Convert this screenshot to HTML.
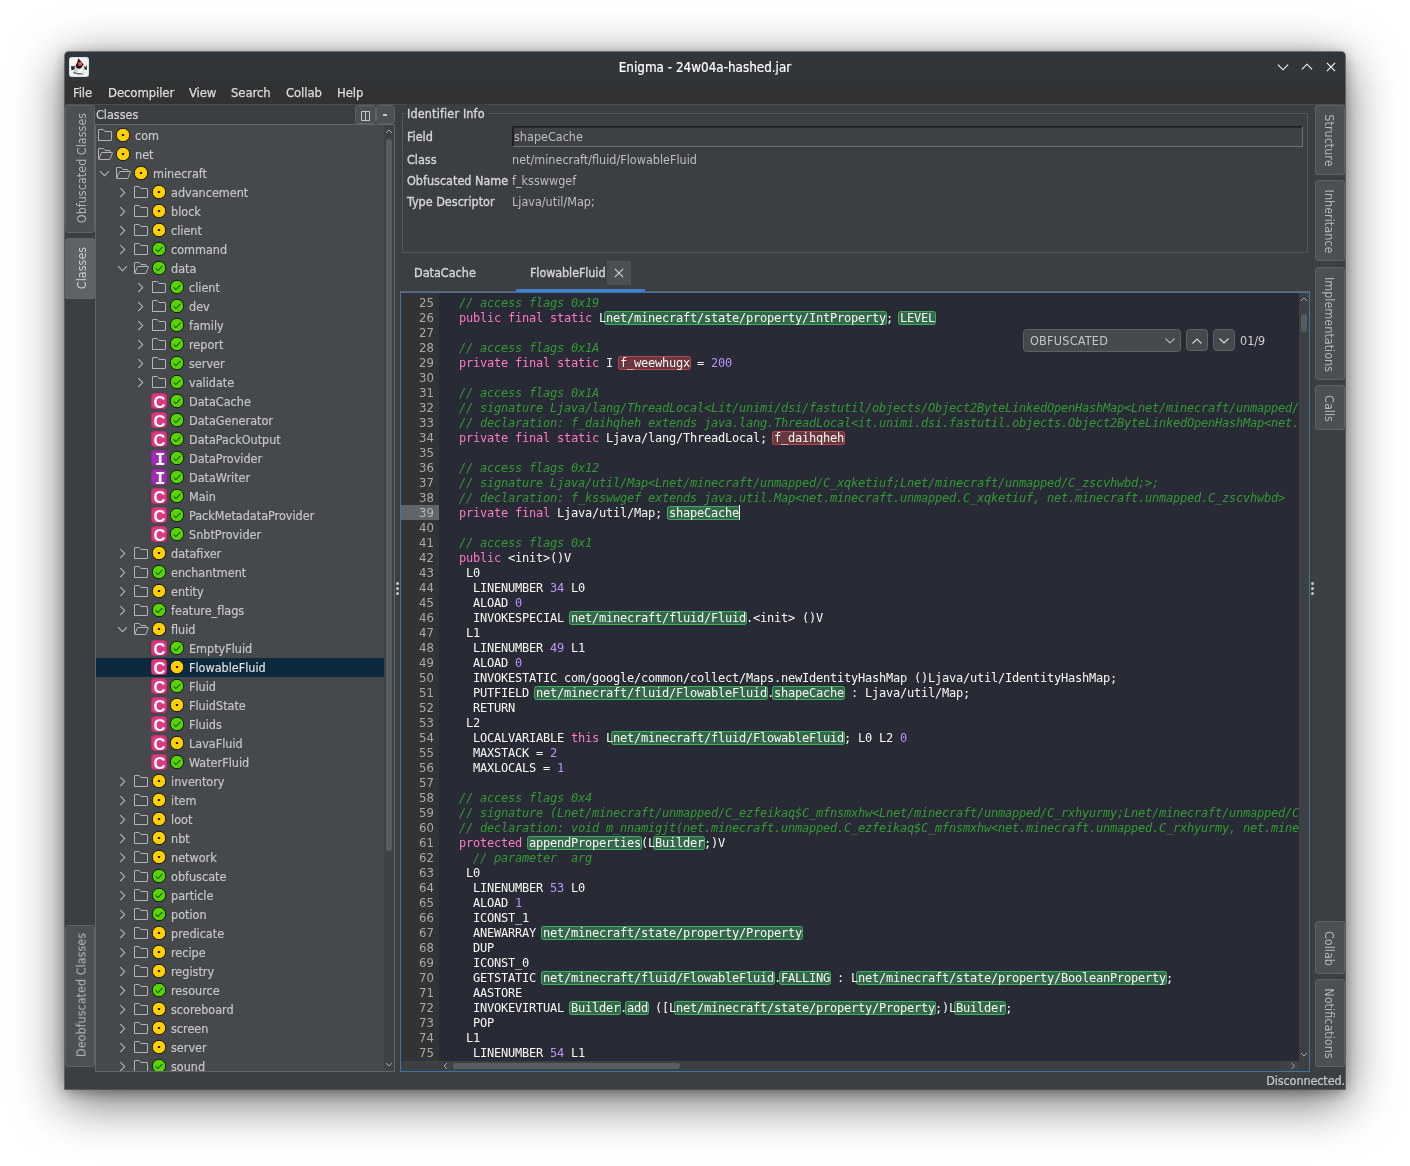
<!DOCTYPE html>
<html lang="en"><head><meta charset="utf-8"><title>Enigma - 24w04a-hashed.jar</title>
<style>
*{box-sizing:border-box;margin:0;padding:0}
html,body{width:1410px;height:1166px;background:#fff;overflow:hidden}
body{font-family:"DejaVu Sans Condensed", "Liberation Sans", sans-serif;font-size:12.5px;color:#c0c2c3;position:relative}
#win{will-change:transform;position:absolute;left:65px;top:52px;width:1280px;height:1037px;background:#3c3f41;border-radius:4px 4px 0 0;
  box-shadow:0 0 0 1px rgba(40,44,48,.55), 0 12px 50px 1px rgba(0,0,0,.58), 0 3px 14px rgba(0,0,0,.35)}
#winclip{position:absolute;left:0;top:0;width:1280px;height:1037px;border-radius:4px 4px 0 0;overflow:hidden}
#title{position:absolute;left:0;top:0;width:1280px;height:29px;background:#31363b;color:#fcfcfc;text-align:center;line-height:32px;font-size:13.350px;-webkit-text-stroke:0.2px #fcfcfc}
#menu{position:absolute;left:0;top:29px;width:1280px;height:24px;background:#303234;border-bottom:1px solid #4c4f51}
#menu span{position:absolute;top:0;line-height:23px;color:#dcdddd;white-space:nowrap;font-size:13px;-webkit-text-stroke:0.25px #dcdddd;letter-spacing:-0.1px}
.abs{position:absolute}
.vtab{position:absolute;width:30px;background:#4c5052;border:1px solid #5e6264;border-radius:3px;color:#b4b6b7}
.vtab.sel{background:#5e6366;border-color:#5e6366;color:#cfd1d2;border-radius:2px}
.vtab span{position:absolute;left:50%;top:50%;white-space:nowrap;display:block}
#tree{position:absolute;left:30px;top:72px;width:300px;height:948px;background:#45494b;border:1px solid #626567;overflow:hidden}
#treein{position:absolute;left:0;top:1px;width:288px;height:945px;overflow:hidden}
.row{position:absolute;left:0;width:288px;height:19px}
.row.sel{background:#0d293e}
.row .ic{position:absolute;top:-1px}.row .arr{position:absolute;top:0}
.row .lbl{position:absolute;top:0;line-height:19px;white-space:nowrap;color:#c4c5c6;-webkit-text-stroke:0.2px #c4c5c6}
.row.sel .lbl{color:#e6e7e8}
.kb{position:absolute;top:1px;width:16px;height:16px;border-radius:4px;color:#fff;font-weight:bold;text-align:center;border:1px solid rgba(150,20,70,.30)}
.kc{background:#dc3780;font-family:"Liberation Sans",sans-serif;font-size:16.500px;line-height:16px;text-indent:0.8px}
.ki{background:#9c2bb5;font-family:"DejaVu Sans Mono","Liberation Mono",monospace;font-size:15px;line-height:19px;text-indent:1.5px}
.ki b{display:inline-block;transform:scaleX(1.2)}
#hdr{position:absolute;left:31px;top:53px;width:200px;height:19px;line-height:19px;color:#d2d4d5;-webkit-text-stroke:0.2px #d2d4d5}
.sbtn{position:absolute;background:#4c5052;border:1px solid #5e6264;border-radius:3.5px}
#tsb{position:absolute;left:288px;top:0;width:10px;height:946px;background:#3e4245}
.thumb{position:absolute;background:#585d61;border-radius:3px}
#ed{position:absolute;left:335px;top:240px;width:910px;height:780px;border:1px solid #4671a3;background:#282a36;overflow:hidden}
#gut{position:absolute;left:0;top:0;width:38px;height:768px;background:#313335}
.ln{position:absolute;left:0;width:38px;height:15px;line-height:15px;text-align:right;padding-right:5px;color:#a9a9a8;font-size:13px;top:0}
.ln.cur{background:#626567;color:#b4b4b3}
#codein{position:absolute;left:0;top:3px}#gutin{position:absolute;left:0;top:2px}
#code{position:absolute;left:38px;top:0;width:860px;height:768px;overflow:hidden;z-index:0}
.cl{position:absolute;left:20px;height:15px;line-height:15px;white-space:pre;font-family:"DejaVu Sans Mono", "Liberation Mono", monospace;font-size:12px;letter-spacing:-0.2246px;color:#f8f8f2}
.cl .c{color:#339933;font-style:italic}
.cl .k{color:#ff79c6}
.cl .n{color:#bd93f9}
.cl .g,.cl .r{position:relative}
.cl .g::before,.cl .r::before{content:"";position:absolute;left:-2px;right:-1px;top:0;bottom:0;border-radius:2.5px;z-index:-1}
.cl .g::before{background:#34684b;border:1px solid #41ac60}
.cl .r::before{background:#69373f;border:1px solid #b8474c}
.caret{display:inline-block;width:1px;height:15px;background:#f8f8f2;vertical-align:top;margin-top:-1px;margin-left:0}
.vsb{position:absolute;left:898px;top:0;width:10px;height:768px;background:#3e4144}
.hsb{position:absolute;left:0;top:768px;width:908px;height:10px;background:#3e4144}
.lb{color:#d4d6d7;-webkit-text-stroke:0.35px #d4d6d7;white-space:nowrap}
.val{color:#bcbec0;white-space:nowrap}
#grp{position:absolute;left:337px;top:61px;width:906px;height:140px;border:1px solid #55585a}
.etab{position:absolute;line-height:20px;white-space:nowrap;color:#d2d4d5}
.btn2{position:absolute;background:#46494b;border:1px solid #5e6264;border-radius:3.5px}
</style></head><body>
<div id="win"><div id="winclip">
<div id="title">Enigma - 24w04a-hashed.jar</div>
<svg class="abs" style="left:4px;top:5px;" width="20" height="20" viewBox="0 0 20 20"><defs><linearGradient id="dk" x1="0" y1="0" x2="1" y2="0"><stop offset="0" stop-color="#b4b6ba"/><stop offset="0.6" stop-color="#ffffff"/><stop offset="1" stop-color="#d6d7da"/></linearGradient></defs><rect x="0" y="0" width="20" height="20" rx="3" fill="#f2f3f1"/><rect x="0.250" y="0.250" width="19.500" height="19.500" rx="2.900" fill="none" stroke="#9db0cc" stroke-width="0.500" opacity="0.700"/><path d="M6 8.600 C5.500 11 5.400 14 4.400 16.300 L8.800 17.300 L10.200 16 L11.800 17.300 L15.700 16.300 C15 13.500 15 10.500 14.600 8 C13.500 10 12 11.600 10.200 11.600 C8.300 11.600 6.800 10.500 6 8.600 Z" fill="url(#dk)"/><path d="M9.300 1.300 C8.800 4.500 7.900 6.200 6.700 8.300 C6.600 10.500 8.500 11.900 10.200 11.700 C12 11.600 13 10.500 13.400 9 L14.800 7.700 C13 5.500 11 3 9.300 1.300 Z" fill="#15171a"/><path d="M1.900 9.600 L5.900 8.700 L5.600 11.900 L2.700 13.400 Z" fill="#1d1f24"/><path d="M3 10 L5.400 9.400 L5.200 10.400 Z" fill="#7d9cc4"/><path d="M15 8.200 L16.500 10.400 L17.700 7.300 L17.900 12.900 L15.500 12.200 Z" fill="#23252a"/><path d="M3.800 15.400 C6 14.600 8 16.200 10 16 C12 15.800 13.500 16.600 15 17.200 C12 17.600 6 17.600 3.800 15.400 Z" fill="#3a3c40" opacity="0.750"/><circle cx="11" cy="6.900" r="2.150" fill="#f23b45"/><circle cx="11.500" cy="6.300" r="0.800" fill="#ff7f7f"/></svg>
<svg class="abs" style="left:1210px;top:7px;" width="16" height="16" viewBox="0 0 16 16"><path d="M2.900 5.700 L8 10.800 L13.100 5.700" fill="none" stroke="#fcfcfc" stroke-width="1.100"/></svg><svg class="abs" style="left:1234px;top:7px;" width="16" height="16" viewBox="0 0 16 16"><path d="M2.900 10.300 L8 5.200 L13.100 10.300" fill="none" stroke="#fcfcfc" stroke-width="1.100"/></svg><svg class="abs" style="left:1258px;top:7px;" width="16" height="16" viewBox="0 0 16 16"><path d="M3.900 3.900 L12.100 12.100 M12.100 3.900 L3.900 12.100" fill="none" stroke="#fcfcfc" stroke-width="1.100"/></svg>
<div id="menu"><span style="left:8px">File</span><span style="left:43px">Decompiler</span><span style="left:124px">View</span><span style="left:166px">Search</span><span style="left:221px">Collab</span><span style="left:272px">Help</span></div>
<div class="vtab" style="left:0px;top:53px;height:128px"><span style="transform:translate(calc(-50% + 1px),calc(-50% - 1px)) rotate(-90deg)">Obfuscated Classes</span></div>
<div class="vtab sel" style="left:0px;top:186px;height:61px"><span style="transform:translate(calc(-50% + 1px),calc(-50% - 1px)) rotate(-90deg)">Classes</span></div>
<div class="vtab" style="left:0px;top:873px;height:142px"><span style="transform:translate(calc(-50% + 1px),calc(-50% - 1px)) rotate(-90deg)">Deobfuscated Classes</span></div>
<div class="vtab" style="left:1250px;top:53px;height:70px"><span style="transform:translate(calc(-50% - 1px),calc(-50% + 0.5px)) rotate(90deg)">Structure</span></div>
<div class="vtab" style="left:1250px;top:128px;height:81px"><span style="transform:translate(calc(-50% - 1px),calc(-50% + 0.5px)) rotate(90deg)">Inheritance</span></div>
<div class="vtab" style="left:1250px;top:215px;height:113px"><span style="transform:translate(calc(-50% - 1px),calc(-50% + 0.5px)) rotate(90deg)">Implementations</span></div>
<div class="vtab" style="left:1250px;top:333px;height:45px"><span style="transform:translate(calc(-50% - 1px),calc(-50% + 0.5px)) rotate(90deg)">Calls</span></div>
<div class="vtab" style="left:1250px;top:869px;height:53px"><span style="transform:translate(calc(-50% - 1px),calc(-50% + 0.5px)) rotate(90deg)">Collab</span></div>
<div class="vtab" style="left:1250px;top:927px;height:88px"><span style="transform:translate(calc(-50% - 1px),calc(-50% + 0.5px)) rotate(90deg)">Notifications</span></div>
<div id="hdr">Classes</div>
<div class="sbtn" style="left:290px;top:53px;width:21px;height:19px;"></div>
<svg class="abs" style="left:296px;top:59px;" width="10" height="11" viewBox="0 0 10 11"><path d="M0.500 0.500 H8.500 V9.500 H0.500 Z M4.500 0.500 V9.500" fill="none" stroke="#c4c6c7" stroke-width="1"/></svg>
<div class="sbtn" style="left:311px;top:53px;width:19px;height:19px;"></div>
<div class="abs" style="left:318px;top:62px;width:4px;height:2px;background:#c0c2c3"></div>
<div id="tree"><div id="treein">
<div class="row" style="top:0px"><svg class="ic" style="left:1px" width="16" height="19" viewBox="0 0 16 19"><path d="M1.5 15.5 V5 Q1.5 4.5 2 4.5 H6.2 L8 6.5 H14 Q14.5 6.5 14.5 7 V15 Q14.5 15.500 14 15.500 H2 Q1.5 15.500 1.5 15 Z" fill="none" stroke="#b2b4b5" stroke-width="1" stroke-linejoin="round"/></svg><svg class="ic" style="left:19px" width="16" height="19" viewBox="0 0 16 19"><circle cx="8" cy="10" r="6.750" fill="#ffd000" stroke="#151515" stroke-width="1"/><rect x="6.900" y="8.900" width="2.200" height="2.200" rx="0.600" fill="#151515"/></svg><span class="lbl" style="left:39px">com</span></div>
<div class="row" style="top:19px"><svg class="ic" style="left:1px" width="17" height="19" viewBox="0 0 17 19"><path d="M1.500 15 V5 Q1.5 4.5 2 4.5 H6.2 L8 6.5 H12.500 Q13 6.5 13 7 V8.500 M1.700 15.300 L4.300 9 Q4.500 8.500 5 8.500 H15 Q15.700 8.500 15.400 9.100 L13 15 Q12.800 15.500 12.300 15.500 H2 Q1.500 15.500 1.700 15.300 Z" fill="none" stroke="#b2b4b5" stroke-width="1" stroke-linejoin="round"/></svg><svg class="ic" style="left:19px" width="16" height="19" viewBox="0 0 16 19"><circle cx="8" cy="10" r="6.750" fill="#ffd000" stroke="#151515" stroke-width="1"/><rect x="6.900" y="8.900" width="2.200" height="2.200" rx="0.600" fill="#151515"/></svg><span class="lbl" style="left:39px">net</span></div>
<div class="row" style="top:38px"><svg class="arr" style="left:2px" width="12" height="19" viewBox="0 0 12 19"><path d="M2 7.200 L6.500 11.700 L11 7.200" fill="none" stroke="#b2b4b5" stroke-width="1.100"/></svg><svg class="ic" style="left:19px" width="17" height="19" viewBox="0 0 17 19"><path d="M1.500 15 V5 Q1.5 4.5 2 4.5 H6.2 L8 6.5 H12.500 Q13 6.5 13 7 V8.500 M1.700 15.300 L4.300 9 Q4.500 8.500 5 8.500 H15 Q15.700 8.500 15.400 9.100 L13 15 Q12.800 15.500 12.300 15.500 H2 Q1.500 15.500 1.700 15.300 Z" fill="none" stroke="#b2b4b5" stroke-width="1" stroke-linejoin="round"/></svg><svg class="ic" style="left:37px" width="16" height="19" viewBox="0 0 16 19"><circle cx="8" cy="10" r="6.750" fill="#ffd000" stroke="#151515" stroke-width="1"/><rect x="6.900" y="8.900" width="2.200" height="2.200" rx="0.600" fill="#151515"/></svg><span class="lbl" style="left:57px">minecraft</span></div>
<div class="row" style="top:57px"><svg class="arr" style="left:20px" width="12" height="19" viewBox="0 0 12 19"><path d="M4.300 5.200 L8.700 9.600 L4.300 14" fill="none" stroke="#b2b4b5" stroke-width="1.100"/></svg><svg class="ic" style="left:37px" width="16" height="19" viewBox="0 0 16 19"><path d="M1.5 15.5 V5 Q1.5 4.5 2 4.5 H6.2 L8 6.5 H14 Q14.5 6.5 14.5 7 V15 Q14.5 15.500 14 15.500 H2 Q1.5 15.500 1.5 15 Z" fill="none" stroke="#b2b4b5" stroke-width="1" stroke-linejoin="round"/></svg><svg class="ic" style="left:55px" width="16" height="19" viewBox="0 0 16 19"><circle cx="8" cy="10" r="6.750" fill="#ffd000" stroke="#151515" stroke-width="1"/><rect x="6.900" y="8.900" width="2.200" height="2.200" rx="0.600" fill="#151515"/></svg><span class="lbl" style="left:75px">advancement</span></div>
<div class="row" style="top:76px"><svg class="arr" style="left:20px" width="12" height="19" viewBox="0 0 12 19"><path d="M4.300 5.200 L8.700 9.600 L4.300 14" fill="none" stroke="#b2b4b5" stroke-width="1.100"/></svg><svg class="ic" style="left:37px" width="16" height="19" viewBox="0 0 16 19"><path d="M1.5 15.5 V5 Q1.5 4.5 2 4.5 H6.2 L8 6.5 H14 Q14.5 6.5 14.5 7 V15 Q14.5 15.500 14 15.500 H2 Q1.5 15.500 1.5 15 Z" fill="none" stroke="#b2b4b5" stroke-width="1" stroke-linejoin="round"/></svg><svg class="ic" style="left:55px" width="16" height="19" viewBox="0 0 16 19"><circle cx="8" cy="10" r="6.750" fill="#ffd000" stroke="#151515" stroke-width="1"/><rect x="6.900" y="8.900" width="2.200" height="2.200" rx="0.600" fill="#151515"/></svg><span class="lbl" style="left:75px">block</span></div>
<div class="row" style="top:95px"><svg class="arr" style="left:20px" width="12" height="19" viewBox="0 0 12 19"><path d="M4.300 5.200 L8.700 9.600 L4.300 14" fill="none" stroke="#b2b4b5" stroke-width="1.100"/></svg><svg class="ic" style="left:37px" width="16" height="19" viewBox="0 0 16 19"><path d="M1.5 15.5 V5 Q1.5 4.5 2 4.5 H6.2 L8 6.5 H14 Q14.5 6.5 14.5 7 V15 Q14.5 15.500 14 15.500 H2 Q1.5 15.500 1.5 15 Z" fill="none" stroke="#b2b4b5" stroke-width="1" stroke-linejoin="round"/></svg><svg class="ic" style="left:55px" width="16" height="19" viewBox="0 0 16 19"><circle cx="8" cy="10" r="6.750" fill="#ffd000" stroke="#151515" stroke-width="1"/><rect x="6.900" y="8.900" width="2.200" height="2.200" rx="0.600" fill="#151515"/></svg><span class="lbl" style="left:75px">client</span></div>
<div class="row" style="top:114px"><svg class="arr" style="left:20px" width="12" height="19" viewBox="0 0 12 19"><path d="M4.300 5.200 L8.700 9.600 L4.300 14" fill="none" stroke="#b2b4b5" stroke-width="1.100"/></svg><svg class="ic" style="left:37px" width="16" height="19" viewBox="0 0 16 19"><path d="M1.5 15.5 V5 Q1.5 4.5 2 4.5 H6.2 L8 6.5 H14 Q14.5 6.5 14.5 7 V15 Q14.5 15.500 14 15.500 H2 Q1.5 15.500 1.5 15 Z" fill="none" stroke="#b2b4b5" stroke-width="1" stroke-linejoin="round"/></svg><svg class="ic" style="left:55px" width="16" height="19" viewBox="0 0 16 19"><circle cx="8" cy="10" r="6.750" fill="#55d400" stroke="#151515" stroke-width="1"/><path d="M4.600 10.400 L7 12.700 L11.400 7.900" fill="none" stroke="#111" stroke-width="0.950"/></svg><span class="lbl" style="left:75px">command</span></div>
<div class="row" style="top:133px"><svg class="arr" style="left:20px" width="12" height="19" viewBox="0 0 12 19"><path d="M2 7.200 L6.500 11.700 L11 7.200" fill="none" stroke="#b2b4b5" stroke-width="1.100"/></svg><svg class="ic" style="left:37px" width="17" height="19" viewBox="0 0 17 19"><path d="M1.500 15 V5 Q1.5 4.5 2 4.5 H6.2 L8 6.5 H12.500 Q13 6.5 13 7 V8.500 M1.700 15.300 L4.300 9 Q4.500 8.500 5 8.500 H15 Q15.700 8.500 15.400 9.100 L13 15 Q12.800 15.500 12.300 15.500 H2 Q1.500 15.500 1.700 15.300 Z" fill="none" stroke="#b2b4b5" stroke-width="1" stroke-linejoin="round"/></svg><svg class="ic" style="left:55px" width="16" height="19" viewBox="0 0 16 19"><circle cx="8" cy="10" r="6.750" fill="#55d400" stroke="#151515" stroke-width="1"/><path d="M4.600 10.400 L7 12.700 L11.400 7.900" fill="none" stroke="#111" stroke-width="0.950"/></svg><span class="lbl" style="left:75px">data</span></div>
<div class="row" style="top:152px"><svg class="arr" style="left:38px" width="12" height="19" viewBox="0 0 12 19"><path d="M4.300 5.200 L8.700 9.600 L4.300 14" fill="none" stroke="#b2b4b5" stroke-width="1.100"/></svg><svg class="ic" style="left:55px" width="16" height="19" viewBox="0 0 16 19"><path d="M1.5 15.5 V5 Q1.5 4.5 2 4.5 H6.2 L8 6.5 H14 Q14.5 6.5 14.5 7 V15 Q14.5 15.500 14 15.500 H2 Q1.5 15.500 1.5 15 Z" fill="none" stroke="#b2b4b5" stroke-width="1" stroke-linejoin="round"/></svg><svg class="ic" style="left:73px" width="16" height="19" viewBox="0 0 16 19"><circle cx="8" cy="10" r="6.750" fill="#55d400" stroke="#151515" stroke-width="1"/><path d="M4.600 10.400 L7 12.700 L11.400 7.900" fill="none" stroke="#111" stroke-width="0.950"/></svg><span class="lbl" style="left:93px">client</span></div>
<div class="row" style="top:171px"><svg class="arr" style="left:38px" width="12" height="19" viewBox="0 0 12 19"><path d="M4.300 5.200 L8.700 9.600 L4.300 14" fill="none" stroke="#b2b4b5" stroke-width="1.100"/></svg><svg class="ic" style="left:55px" width="16" height="19" viewBox="0 0 16 19"><path d="M1.5 15.5 V5 Q1.5 4.5 2 4.5 H6.2 L8 6.5 H14 Q14.5 6.5 14.5 7 V15 Q14.5 15.500 14 15.500 H2 Q1.5 15.500 1.5 15 Z" fill="none" stroke="#b2b4b5" stroke-width="1" stroke-linejoin="round"/></svg><svg class="ic" style="left:73px" width="16" height="19" viewBox="0 0 16 19"><circle cx="8" cy="10" r="6.750" fill="#55d400" stroke="#151515" stroke-width="1"/><path d="M4.600 10.400 L7 12.700 L11.400 7.900" fill="none" stroke="#111" stroke-width="0.950"/></svg><span class="lbl" style="left:93px">dev</span></div>
<div class="row" style="top:190px"><svg class="arr" style="left:38px" width="12" height="19" viewBox="0 0 12 19"><path d="M4.300 5.200 L8.700 9.600 L4.300 14" fill="none" stroke="#b2b4b5" stroke-width="1.100"/></svg><svg class="ic" style="left:55px" width="16" height="19" viewBox="0 0 16 19"><path d="M1.5 15.5 V5 Q1.5 4.5 2 4.5 H6.2 L8 6.5 H14 Q14.5 6.5 14.5 7 V15 Q14.5 15.500 14 15.500 H2 Q1.5 15.500 1.5 15 Z" fill="none" stroke="#b2b4b5" stroke-width="1" stroke-linejoin="round"/></svg><svg class="ic" style="left:73px" width="16" height="19" viewBox="0 0 16 19"><circle cx="8" cy="10" r="6.750" fill="#55d400" stroke="#151515" stroke-width="1"/><path d="M4.600 10.400 L7 12.700 L11.400 7.900" fill="none" stroke="#111" stroke-width="0.950"/></svg><span class="lbl" style="left:93px">family</span></div>
<div class="row" style="top:209px"><svg class="arr" style="left:38px" width="12" height="19" viewBox="0 0 12 19"><path d="M4.300 5.200 L8.700 9.600 L4.300 14" fill="none" stroke="#b2b4b5" stroke-width="1.100"/></svg><svg class="ic" style="left:55px" width="16" height="19" viewBox="0 0 16 19"><path d="M1.5 15.5 V5 Q1.5 4.5 2 4.5 H6.2 L8 6.5 H14 Q14.5 6.5 14.5 7 V15 Q14.5 15.500 14 15.500 H2 Q1.5 15.500 1.5 15 Z" fill="none" stroke="#b2b4b5" stroke-width="1" stroke-linejoin="round"/></svg><svg class="ic" style="left:73px" width="16" height="19" viewBox="0 0 16 19"><circle cx="8" cy="10" r="6.750" fill="#55d400" stroke="#151515" stroke-width="1"/><path d="M4.600 10.400 L7 12.700 L11.400 7.900" fill="none" stroke="#111" stroke-width="0.950"/></svg><span class="lbl" style="left:93px">report</span></div>
<div class="row" style="top:228px"><svg class="arr" style="left:38px" width="12" height="19" viewBox="0 0 12 19"><path d="M4.300 5.200 L8.700 9.600 L4.300 14" fill="none" stroke="#b2b4b5" stroke-width="1.100"/></svg><svg class="ic" style="left:55px" width="16" height="19" viewBox="0 0 16 19"><path d="M1.5 15.5 V5 Q1.5 4.5 2 4.5 H6.2 L8 6.5 H14 Q14.5 6.5 14.5 7 V15 Q14.5 15.500 14 15.500 H2 Q1.5 15.500 1.5 15 Z" fill="none" stroke="#b2b4b5" stroke-width="1" stroke-linejoin="round"/></svg><svg class="ic" style="left:73px" width="16" height="19" viewBox="0 0 16 19"><circle cx="8" cy="10" r="6.750" fill="#55d400" stroke="#151515" stroke-width="1"/><path d="M4.600 10.400 L7 12.700 L11.400 7.900" fill="none" stroke="#111" stroke-width="0.950"/></svg><span class="lbl" style="left:93px">server</span></div>
<div class="row" style="top:247px"><svg class="arr" style="left:38px" width="12" height="19" viewBox="0 0 12 19"><path d="M4.300 5.200 L8.700 9.600 L4.300 14" fill="none" stroke="#b2b4b5" stroke-width="1.100"/></svg><svg class="ic" style="left:55px" width="16" height="19" viewBox="0 0 16 19"><path d="M1.5 15.5 V5 Q1.5 4.5 2 4.5 H6.2 L8 6.5 H14 Q14.5 6.5 14.5 7 V15 Q14.5 15.500 14 15.500 H2 Q1.5 15.500 1.5 15 Z" fill="none" stroke="#b2b4b5" stroke-width="1" stroke-linejoin="round"/></svg><svg class="ic" style="left:73px" width="16" height="19" viewBox="0 0 16 19"><circle cx="8" cy="10" r="6.750" fill="#55d400" stroke="#151515" stroke-width="1"/><path d="M4.600 10.400 L7 12.700 L11.400 7.900" fill="none" stroke="#111" stroke-width="0.950"/></svg><span class="lbl" style="left:93px">validate</span></div>
<div class="row" style="top:266px"><span class="kb kc" style="left:55px">C</span><svg class="ic" style="left:73px" width="16" height="19" viewBox="0 0 16 19"><circle cx="8" cy="10" r="6.750" fill="#55d400" stroke="#151515" stroke-width="1"/><path d="M4.600 10.400 L7 12.700 L11.400 7.900" fill="none" stroke="#111" stroke-width="0.950"/></svg><span class="lbl" style="left:93px">DataCache</span></div>
<div class="row" style="top:285px"><span class="kb kc" style="left:55px">C</span><svg class="ic" style="left:73px" width="16" height="19" viewBox="0 0 16 19"><circle cx="8" cy="10" r="6.750" fill="#55d400" stroke="#151515" stroke-width="1"/><path d="M4.600 10.400 L7 12.700 L11.400 7.900" fill="none" stroke="#111" stroke-width="0.950"/></svg><span class="lbl" style="left:93px">DataGenerator</span></div>
<div class="row" style="top:304px"><span class="kb kc" style="left:55px">C</span><svg class="ic" style="left:73px" width="16" height="19" viewBox="0 0 16 19"><circle cx="8" cy="10" r="6.750" fill="#55d400" stroke="#151515" stroke-width="1"/><path d="M4.600 10.400 L7 12.700 L11.400 7.900" fill="none" stroke="#111" stroke-width="0.950"/></svg><span class="lbl" style="left:93px">DataPackOutput</span></div>
<div class="row" style="top:323px"><span class="kb ki" style="left:55px"><b>I</b></span><svg class="ic" style="left:73px" width="16" height="19" viewBox="0 0 16 19"><circle cx="8" cy="10" r="6.750" fill="#55d400" stroke="#151515" stroke-width="1"/><path d="M4.600 10.400 L7 12.700 L11.400 7.900" fill="none" stroke="#111" stroke-width="0.950"/></svg><span class="lbl" style="left:93px">DataProvider</span></div>
<div class="row" style="top:342px"><span class="kb ki" style="left:55px"><b>I</b></span><svg class="ic" style="left:73px" width="16" height="19" viewBox="0 0 16 19"><circle cx="8" cy="10" r="6.750" fill="#55d400" stroke="#151515" stroke-width="1"/><path d="M4.600 10.400 L7 12.700 L11.400 7.900" fill="none" stroke="#111" stroke-width="0.950"/></svg><span class="lbl" style="left:93px">DataWriter</span></div>
<div class="row" style="top:361px"><span class="kb kc" style="left:55px">C</span><svg class="ic" style="left:73px" width="16" height="19" viewBox="0 0 16 19"><circle cx="8" cy="10" r="6.750" fill="#55d400" stroke="#151515" stroke-width="1"/><path d="M4.600 10.400 L7 12.700 L11.400 7.900" fill="none" stroke="#111" stroke-width="0.950"/></svg><span class="lbl" style="left:93px">Main</span></div>
<div class="row" style="top:380px"><span class="kb kc" style="left:55px">C</span><svg class="ic" style="left:73px" width="16" height="19" viewBox="0 0 16 19"><circle cx="8" cy="10" r="6.750" fill="#55d400" stroke="#151515" stroke-width="1"/><path d="M4.600 10.400 L7 12.700 L11.400 7.900" fill="none" stroke="#111" stroke-width="0.950"/></svg><span class="lbl" style="left:93px">PackMetadataProvider</span></div>
<div class="row" style="top:399px"><span class="kb kc" style="left:55px">C</span><svg class="ic" style="left:73px" width="16" height="19" viewBox="0 0 16 19"><circle cx="8" cy="10" r="6.750" fill="#55d400" stroke="#151515" stroke-width="1"/><path d="M4.600 10.400 L7 12.700 L11.400 7.900" fill="none" stroke="#111" stroke-width="0.950"/></svg><span class="lbl" style="left:93px">SnbtProvider</span></div>
<div class="row" style="top:418px"><svg class="arr" style="left:20px" width="12" height="19" viewBox="0 0 12 19"><path d="M4.300 5.200 L8.700 9.600 L4.300 14" fill="none" stroke="#b2b4b5" stroke-width="1.100"/></svg><svg class="ic" style="left:37px" width="16" height="19" viewBox="0 0 16 19"><path d="M1.5 15.5 V5 Q1.5 4.5 2 4.5 H6.2 L8 6.5 H14 Q14.5 6.5 14.5 7 V15 Q14.5 15.500 14 15.500 H2 Q1.5 15.500 1.5 15 Z" fill="none" stroke="#b2b4b5" stroke-width="1" stroke-linejoin="round"/></svg><svg class="ic" style="left:55px" width="16" height="19" viewBox="0 0 16 19"><circle cx="8" cy="10" r="6.750" fill="#ffd000" stroke="#151515" stroke-width="1"/><rect x="6.900" y="8.900" width="2.200" height="2.200" rx="0.600" fill="#151515"/></svg><span class="lbl" style="left:75px">datafixer</span></div>
<div class="row" style="top:437px"><svg class="arr" style="left:20px" width="12" height="19" viewBox="0 0 12 19"><path d="M4.300 5.200 L8.700 9.600 L4.300 14" fill="none" stroke="#b2b4b5" stroke-width="1.100"/></svg><svg class="ic" style="left:37px" width="16" height="19" viewBox="0 0 16 19"><path d="M1.5 15.5 V5 Q1.5 4.5 2 4.5 H6.2 L8 6.5 H14 Q14.5 6.5 14.5 7 V15 Q14.5 15.500 14 15.500 H2 Q1.5 15.500 1.5 15 Z" fill="none" stroke="#b2b4b5" stroke-width="1" stroke-linejoin="round"/></svg><svg class="ic" style="left:55px" width="16" height="19" viewBox="0 0 16 19"><circle cx="8" cy="10" r="6.750" fill="#55d400" stroke="#151515" stroke-width="1"/><path d="M4.600 10.400 L7 12.700 L11.400 7.900" fill="none" stroke="#111" stroke-width="0.950"/></svg><span class="lbl" style="left:75px">enchantment</span></div>
<div class="row" style="top:456px"><svg class="arr" style="left:20px" width="12" height="19" viewBox="0 0 12 19"><path d="M4.300 5.200 L8.700 9.600 L4.300 14" fill="none" stroke="#b2b4b5" stroke-width="1.100"/></svg><svg class="ic" style="left:37px" width="16" height="19" viewBox="0 0 16 19"><path d="M1.5 15.5 V5 Q1.5 4.5 2 4.5 H6.2 L8 6.5 H14 Q14.5 6.5 14.5 7 V15 Q14.5 15.500 14 15.500 H2 Q1.5 15.500 1.5 15 Z" fill="none" stroke="#b2b4b5" stroke-width="1" stroke-linejoin="round"/></svg><svg class="ic" style="left:55px" width="16" height="19" viewBox="0 0 16 19"><circle cx="8" cy="10" r="6.750" fill="#ffd000" stroke="#151515" stroke-width="1"/><rect x="6.900" y="8.900" width="2.200" height="2.200" rx="0.600" fill="#151515"/></svg><span class="lbl" style="left:75px">entity</span></div>
<div class="row" style="top:475px"><svg class="arr" style="left:20px" width="12" height="19" viewBox="0 0 12 19"><path d="M4.300 5.200 L8.700 9.600 L4.300 14" fill="none" stroke="#b2b4b5" stroke-width="1.100"/></svg><svg class="ic" style="left:37px" width="16" height="19" viewBox="0 0 16 19"><path d="M1.5 15.5 V5 Q1.5 4.5 2 4.5 H6.2 L8 6.5 H14 Q14.5 6.5 14.5 7 V15 Q14.5 15.500 14 15.500 H2 Q1.5 15.500 1.5 15 Z" fill="none" stroke="#b2b4b5" stroke-width="1" stroke-linejoin="round"/></svg><svg class="ic" style="left:55px" width="16" height="19" viewBox="0 0 16 19"><circle cx="8" cy="10" r="6.750" fill="#55d400" stroke="#151515" stroke-width="1"/><path d="M4.600 10.400 L7 12.700 L11.400 7.900" fill="none" stroke="#111" stroke-width="0.950"/></svg><span class="lbl" style="left:75px">feature_flags</span></div>
<div class="row" style="top:494px"><svg class="arr" style="left:20px" width="12" height="19" viewBox="0 0 12 19"><path d="M2 7.200 L6.500 11.700 L11 7.200" fill="none" stroke="#b2b4b5" stroke-width="1.100"/></svg><svg class="ic" style="left:37px" width="17" height="19" viewBox="0 0 17 19"><path d="M1.500 15 V5 Q1.5 4.5 2 4.5 H6.2 L8 6.5 H12.500 Q13 6.5 13 7 V8.500 M1.700 15.300 L4.300 9 Q4.500 8.500 5 8.500 H15 Q15.700 8.500 15.400 9.100 L13 15 Q12.800 15.500 12.300 15.500 H2 Q1.500 15.500 1.700 15.300 Z" fill="none" stroke="#b2b4b5" stroke-width="1" stroke-linejoin="round"/></svg><svg class="ic" style="left:55px" width="16" height="19" viewBox="0 0 16 19"><circle cx="8" cy="10" r="6.750" fill="#ffd000" stroke="#151515" stroke-width="1"/><rect x="6.900" y="8.900" width="2.200" height="2.200" rx="0.600" fill="#151515"/></svg><span class="lbl" style="left:75px">fluid</span></div>
<div class="row" style="top:513px"><span class="kb kc" style="left:55px">C</span><svg class="ic" style="left:73px" width="16" height="19" viewBox="0 0 16 19"><circle cx="8" cy="10" r="6.750" fill="#55d400" stroke="#151515" stroke-width="1"/><path d="M4.600 10.400 L7 12.700 L11.400 7.900" fill="none" stroke="#111" stroke-width="0.950"/></svg><span class="lbl" style="left:93px">EmptyFluid</span></div>
<div class="row sel" style="top:532px"><span class="kb kc" style="left:55px">C</span><svg class="ic" style="left:73px" width="16" height="19" viewBox="0 0 16 19"><circle cx="8" cy="10" r="6.750" fill="#ffd000" stroke="#151515" stroke-width="1"/><rect x="6.900" y="8.900" width="2.200" height="2.200" rx="0.600" fill="#151515"/></svg><span class="lbl" style="left:93px">FlowableFluid</span></div>
<div class="row" style="top:551px"><span class="kb kc" style="left:55px">C</span><svg class="ic" style="left:73px" width="16" height="19" viewBox="0 0 16 19"><circle cx="8" cy="10" r="6.750" fill="#55d400" stroke="#151515" stroke-width="1"/><path d="M4.600 10.400 L7 12.700 L11.400 7.900" fill="none" stroke="#111" stroke-width="0.950"/></svg><span class="lbl" style="left:93px">Fluid</span></div>
<div class="row" style="top:570px"><span class="kb kc" style="left:55px">C</span><svg class="ic" style="left:73px" width="16" height="19" viewBox="0 0 16 19"><circle cx="8" cy="10" r="6.750" fill="#ffd000" stroke="#151515" stroke-width="1"/><rect x="6.900" y="8.900" width="2.200" height="2.200" rx="0.600" fill="#151515"/></svg><span class="lbl" style="left:93px">FluidState</span></div>
<div class="row" style="top:589px"><span class="kb kc" style="left:55px">C</span><svg class="ic" style="left:73px" width="16" height="19" viewBox="0 0 16 19"><circle cx="8" cy="10" r="6.750" fill="#55d400" stroke="#151515" stroke-width="1"/><path d="M4.600 10.400 L7 12.700 L11.400 7.900" fill="none" stroke="#111" stroke-width="0.950"/></svg><span class="lbl" style="left:93px">Fluids</span></div>
<div class="row" style="top:608px"><span class="kb kc" style="left:55px">C</span><svg class="ic" style="left:73px" width="16" height="19" viewBox="0 0 16 19"><circle cx="8" cy="10" r="6.750" fill="#ffd000" stroke="#151515" stroke-width="1"/><rect x="6.900" y="8.900" width="2.200" height="2.200" rx="0.600" fill="#151515"/></svg><span class="lbl" style="left:93px">LavaFluid</span></div>
<div class="row" style="top:627px"><span class="kb kc" style="left:55px">C</span><svg class="ic" style="left:73px" width="16" height="19" viewBox="0 0 16 19"><circle cx="8" cy="10" r="6.750" fill="#55d400" stroke="#151515" stroke-width="1"/><path d="M4.600 10.400 L7 12.700 L11.400 7.900" fill="none" stroke="#111" stroke-width="0.950"/></svg><span class="lbl" style="left:93px">WaterFluid</span></div>
<div class="row" style="top:646px"><svg class="arr" style="left:20px" width="12" height="19" viewBox="0 0 12 19"><path d="M4.300 5.200 L8.700 9.600 L4.300 14" fill="none" stroke="#b2b4b5" stroke-width="1.100"/></svg><svg class="ic" style="left:37px" width="16" height="19" viewBox="0 0 16 19"><path d="M1.5 15.5 V5 Q1.5 4.5 2 4.5 H6.2 L8 6.5 H14 Q14.5 6.5 14.5 7 V15 Q14.5 15.500 14 15.500 H2 Q1.5 15.500 1.5 15 Z" fill="none" stroke="#b2b4b5" stroke-width="1" stroke-linejoin="round"/></svg><svg class="ic" style="left:55px" width="16" height="19" viewBox="0 0 16 19"><circle cx="8" cy="10" r="6.750" fill="#ffd000" stroke="#151515" stroke-width="1"/><rect x="6.900" y="8.900" width="2.200" height="2.200" rx="0.600" fill="#151515"/></svg><span class="lbl" style="left:75px">inventory</span></div>
<div class="row" style="top:665px"><svg class="arr" style="left:20px" width="12" height="19" viewBox="0 0 12 19"><path d="M4.300 5.200 L8.700 9.600 L4.300 14" fill="none" stroke="#b2b4b5" stroke-width="1.100"/></svg><svg class="ic" style="left:37px" width="16" height="19" viewBox="0 0 16 19"><path d="M1.5 15.5 V5 Q1.5 4.5 2 4.5 H6.2 L8 6.5 H14 Q14.5 6.5 14.5 7 V15 Q14.5 15.500 14 15.500 H2 Q1.5 15.500 1.5 15 Z" fill="none" stroke="#b2b4b5" stroke-width="1" stroke-linejoin="round"/></svg><svg class="ic" style="left:55px" width="16" height="19" viewBox="0 0 16 19"><circle cx="8" cy="10" r="6.750" fill="#ffd000" stroke="#151515" stroke-width="1"/><rect x="6.900" y="8.900" width="2.200" height="2.200" rx="0.600" fill="#151515"/></svg><span class="lbl" style="left:75px">item</span></div>
<div class="row" style="top:684px"><svg class="arr" style="left:20px" width="12" height="19" viewBox="0 0 12 19"><path d="M4.300 5.200 L8.700 9.600 L4.300 14" fill="none" stroke="#b2b4b5" stroke-width="1.100"/></svg><svg class="ic" style="left:37px" width="16" height="19" viewBox="0 0 16 19"><path d="M1.5 15.5 V5 Q1.5 4.5 2 4.5 H6.2 L8 6.5 H14 Q14.5 6.5 14.5 7 V15 Q14.5 15.500 14 15.500 H2 Q1.5 15.500 1.5 15 Z" fill="none" stroke="#b2b4b5" stroke-width="1" stroke-linejoin="round"/></svg><svg class="ic" style="left:55px" width="16" height="19" viewBox="0 0 16 19"><circle cx="8" cy="10" r="6.750" fill="#ffd000" stroke="#151515" stroke-width="1"/><rect x="6.900" y="8.900" width="2.200" height="2.200" rx="0.600" fill="#151515"/></svg><span class="lbl" style="left:75px">loot</span></div>
<div class="row" style="top:703px"><svg class="arr" style="left:20px" width="12" height="19" viewBox="0 0 12 19"><path d="M4.300 5.200 L8.700 9.600 L4.300 14" fill="none" stroke="#b2b4b5" stroke-width="1.100"/></svg><svg class="ic" style="left:37px" width="16" height="19" viewBox="0 0 16 19"><path d="M1.5 15.5 V5 Q1.5 4.5 2 4.5 H6.2 L8 6.5 H14 Q14.5 6.5 14.5 7 V15 Q14.5 15.500 14 15.500 H2 Q1.5 15.500 1.5 15 Z" fill="none" stroke="#b2b4b5" stroke-width="1" stroke-linejoin="round"/></svg><svg class="ic" style="left:55px" width="16" height="19" viewBox="0 0 16 19"><circle cx="8" cy="10" r="6.750" fill="#ffd000" stroke="#151515" stroke-width="1"/><rect x="6.900" y="8.900" width="2.200" height="2.200" rx="0.600" fill="#151515"/></svg><span class="lbl" style="left:75px">nbt</span></div>
<div class="row" style="top:722px"><svg class="arr" style="left:20px" width="12" height="19" viewBox="0 0 12 19"><path d="M4.300 5.200 L8.700 9.600 L4.300 14" fill="none" stroke="#b2b4b5" stroke-width="1.100"/></svg><svg class="ic" style="left:37px" width="16" height="19" viewBox="0 0 16 19"><path d="M1.5 15.5 V5 Q1.5 4.5 2 4.5 H6.2 L8 6.5 H14 Q14.5 6.5 14.5 7 V15 Q14.5 15.500 14 15.500 H2 Q1.5 15.500 1.5 15 Z" fill="none" stroke="#b2b4b5" stroke-width="1" stroke-linejoin="round"/></svg><svg class="ic" style="left:55px" width="16" height="19" viewBox="0 0 16 19"><circle cx="8" cy="10" r="6.750" fill="#ffd000" stroke="#151515" stroke-width="1"/><rect x="6.900" y="8.900" width="2.200" height="2.200" rx="0.600" fill="#151515"/></svg><span class="lbl" style="left:75px">network</span></div>
<div class="row" style="top:741px"><svg class="arr" style="left:20px" width="12" height="19" viewBox="0 0 12 19"><path d="M4.300 5.200 L8.700 9.600 L4.300 14" fill="none" stroke="#b2b4b5" stroke-width="1.100"/></svg><svg class="ic" style="left:37px" width="16" height="19" viewBox="0 0 16 19"><path d="M1.5 15.5 V5 Q1.5 4.5 2 4.5 H6.2 L8 6.5 H14 Q14.5 6.5 14.5 7 V15 Q14.5 15.500 14 15.500 H2 Q1.5 15.500 1.5 15 Z" fill="none" stroke="#b2b4b5" stroke-width="1" stroke-linejoin="round"/></svg><svg class="ic" style="left:55px" width="16" height="19" viewBox="0 0 16 19"><circle cx="8" cy="10" r="6.750" fill="#55d400" stroke="#151515" stroke-width="1"/><path d="M4.600 10.400 L7 12.700 L11.400 7.900" fill="none" stroke="#111" stroke-width="0.950"/></svg><span class="lbl" style="left:75px">obfuscate</span></div>
<div class="row" style="top:760px"><svg class="arr" style="left:20px" width="12" height="19" viewBox="0 0 12 19"><path d="M4.300 5.200 L8.700 9.600 L4.300 14" fill="none" stroke="#b2b4b5" stroke-width="1.100"/></svg><svg class="ic" style="left:37px" width="16" height="19" viewBox="0 0 16 19"><path d="M1.5 15.5 V5 Q1.5 4.5 2 4.5 H6.2 L8 6.5 H14 Q14.5 6.5 14.5 7 V15 Q14.5 15.500 14 15.500 H2 Q1.5 15.500 1.5 15 Z" fill="none" stroke="#b2b4b5" stroke-width="1" stroke-linejoin="round"/></svg><svg class="ic" style="left:55px" width="16" height="19" viewBox="0 0 16 19"><circle cx="8" cy="10" r="6.750" fill="#55d400" stroke="#151515" stroke-width="1"/><path d="M4.600 10.400 L7 12.700 L11.400 7.900" fill="none" stroke="#111" stroke-width="0.950"/></svg><span class="lbl" style="left:75px">particle</span></div>
<div class="row" style="top:779px"><svg class="arr" style="left:20px" width="12" height="19" viewBox="0 0 12 19"><path d="M4.300 5.200 L8.700 9.600 L4.300 14" fill="none" stroke="#b2b4b5" stroke-width="1.100"/></svg><svg class="ic" style="left:37px" width="16" height="19" viewBox="0 0 16 19"><path d="M1.5 15.5 V5 Q1.5 4.5 2 4.5 H6.2 L8 6.5 H14 Q14.5 6.5 14.5 7 V15 Q14.5 15.500 14 15.500 H2 Q1.5 15.500 1.5 15 Z" fill="none" stroke="#b2b4b5" stroke-width="1" stroke-linejoin="round"/></svg><svg class="ic" style="left:55px" width="16" height="19" viewBox="0 0 16 19"><circle cx="8" cy="10" r="6.750" fill="#55d400" stroke="#151515" stroke-width="1"/><path d="M4.600 10.400 L7 12.700 L11.400 7.900" fill="none" stroke="#111" stroke-width="0.950"/></svg><span class="lbl" style="left:75px">potion</span></div>
<div class="row" style="top:798px"><svg class="arr" style="left:20px" width="12" height="19" viewBox="0 0 12 19"><path d="M4.300 5.200 L8.700 9.600 L4.300 14" fill="none" stroke="#b2b4b5" stroke-width="1.100"/></svg><svg class="ic" style="left:37px" width="16" height="19" viewBox="0 0 16 19"><path d="M1.5 15.5 V5 Q1.5 4.5 2 4.5 H6.2 L8 6.5 H14 Q14.5 6.5 14.5 7 V15 Q14.5 15.500 14 15.500 H2 Q1.5 15.500 1.5 15 Z" fill="none" stroke="#b2b4b5" stroke-width="1" stroke-linejoin="round"/></svg><svg class="ic" style="left:55px" width="16" height="19" viewBox="0 0 16 19"><circle cx="8" cy="10" r="6.750" fill="#ffd000" stroke="#151515" stroke-width="1"/><rect x="6.900" y="8.900" width="2.200" height="2.200" rx="0.600" fill="#151515"/></svg><span class="lbl" style="left:75px">predicate</span></div>
<div class="row" style="top:817px"><svg class="arr" style="left:20px" width="12" height="19" viewBox="0 0 12 19"><path d="M4.300 5.200 L8.700 9.600 L4.300 14" fill="none" stroke="#b2b4b5" stroke-width="1.100"/></svg><svg class="ic" style="left:37px" width="16" height="19" viewBox="0 0 16 19"><path d="M1.5 15.5 V5 Q1.5 4.5 2 4.5 H6.2 L8 6.5 H14 Q14.5 6.5 14.5 7 V15 Q14.5 15.500 14 15.500 H2 Q1.5 15.500 1.5 15 Z" fill="none" stroke="#b2b4b5" stroke-width="1" stroke-linejoin="round"/></svg><svg class="ic" style="left:55px" width="16" height="19" viewBox="0 0 16 19"><circle cx="8" cy="10" r="6.750" fill="#ffd000" stroke="#151515" stroke-width="1"/><rect x="6.900" y="8.900" width="2.200" height="2.200" rx="0.600" fill="#151515"/></svg><span class="lbl" style="left:75px">recipe</span></div>
<div class="row" style="top:836px"><svg class="arr" style="left:20px" width="12" height="19" viewBox="0 0 12 19"><path d="M4.300 5.200 L8.700 9.600 L4.300 14" fill="none" stroke="#b2b4b5" stroke-width="1.100"/></svg><svg class="ic" style="left:37px" width="16" height="19" viewBox="0 0 16 19"><path d="M1.5 15.5 V5 Q1.5 4.5 2 4.5 H6.2 L8 6.5 H14 Q14.5 6.5 14.5 7 V15 Q14.5 15.500 14 15.500 H2 Q1.5 15.500 1.5 15 Z" fill="none" stroke="#b2b4b5" stroke-width="1" stroke-linejoin="round"/></svg><svg class="ic" style="left:55px" width="16" height="19" viewBox="0 0 16 19"><circle cx="8" cy="10" r="6.750" fill="#ffd000" stroke="#151515" stroke-width="1"/><rect x="6.900" y="8.900" width="2.200" height="2.200" rx="0.600" fill="#151515"/></svg><span class="lbl" style="left:75px">registry</span></div>
<div class="row" style="top:855px"><svg class="arr" style="left:20px" width="12" height="19" viewBox="0 0 12 19"><path d="M4.300 5.200 L8.700 9.600 L4.300 14" fill="none" stroke="#b2b4b5" stroke-width="1.100"/></svg><svg class="ic" style="left:37px" width="16" height="19" viewBox="0 0 16 19"><path d="M1.5 15.5 V5 Q1.5 4.5 2 4.5 H6.2 L8 6.5 H14 Q14.5 6.5 14.5 7 V15 Q14.5 15.500 14 15.500 H2 Q1.5 15.500 1.5 15 Z" fill="none" stroke="#b2b4b5" stroke-width="1" stroke-linejoin="round"/></svg><svg class="ic" style="left:55px" width="16" height="19" viewBox="0 0 16 19"><circle cx="8" cy="10" r="6.750" fill="#55d400" stroke="#151515" stroke-width="1"/><path d="M4.600 10.400 L7 12.700 L11.400 7.900" fill="none" stroke="#111" stroke-width="0.950"/></svg><span class="lbl" style="left:75px">resource</span></div>
<div class="row" style="top:874px"><svg class="arr" style="left:20px" width="12" height="19" viewBox="0 0 12 19"><path d="M4.300 5.200 L8.700 9.600 L4.300 14" fill="none" stroke="#b2b4b5" stroke-width="1.100"/></svg><svg class="ic" style="left:37px" width="16" height="19" viewBox="0 0 16 19"><path d="M1.5 15.5 V5 Q1.5 4.5 2 4.5 H6.2 L8 6.5 H14 Q14.5 6.5 14.5 7 V15 Q14.5 15.500 14 15.500 H2 Q1.5 15.500 1.5 15 Z" fill="none" stroke="#b2b4b5" stroke-width="1" stroke-linejoin="round"/></svg><svg class="ic" style="left:55px" width="16" height="19" viewBox="0 0 16 19"><circle cx="8" cy="10" r="6.750" fill="#ffd000" stroke="#151515" stroke-width="1"/><rect x="6.900" y="8.900" width="2.200" height="2.200" rx="0.600" fill="#151515"/></svg><span class="lbl" style="left:75px">scoreboard</span></div>
<div class="row" style="top:893px"><svg class="arr" style="left:20px" width="12" height="19" viewBox="0 0 12 19"><path d="M4.300 5.200 L8.700 9.600 L4.300 14" fill="none" stroke="#b2b4b5" stroke-width="1.100"/></svg><svg class="ic" style="left:37px" width="16" height="19" viewBox="0 0 16 19"><path d="M1.5 15.5 V5 Q1.5 4.5 2 4.5 H6.2 L8 6.5 H14 Q14.5 6.5 14.5 7 V15 Q14.5 15.500 14 15.500 H2 Q1.5 15.500 1.5 15 Z" fill="none" stroke="#b2b4b5" stroke-width="1" stroke-linejoin="round"/></svg><svg class="ic" style="left:55px" width="16" height="19" viewBox="0 0 16 19"><circle cx="8" cy="10" r="6.750" fill="#ffd000" stroke="#151515" stroke-width="1"/><rect x="6.900" y="8.900" width="2.200" height="2.200" rx="0.600" fill="#151515"/></svg><span class="lbl" style="left:75px">screen</span></div>
<div class="row" style="top:912px"><svg class="arr" style="left:20px" width="12" height="19" viewBox="0 0 12 19"><path d="M4.300 5.200 L8.700 9.600 L4.300 14" fill="none" stroke="#b2b4b5" stroke-width="1.100"/></svg><svg class="ic" style="left:37px" width="16" height="19" viewBox="0 0 16 19"><path d="M1.5 15.5 V5 Q1.5 4.5 2 4.5 H6.2 L8 6.5 H14 Q14.5 6.5 14.5 7 V15 Q14.5 15.500 14 15.500 H2 Q1.5 15.500 1.5 15 Z" fill="none" stroke="#b2b4b5" stroke-width="1" stroke-linejoin="round"/></svg><svg class="ic" style="left:55px" width="16" height="19" viewBox="0 0 16 19"><circle cx="8" cy="10" r="6.750" fill="#ffd000" stroke="#151515" stroke-width="1"/><rect x="6.900" y="8.900" width="2.200" height="2.200" rx="0.600" fill="#151515"/></svg><span class="lbl" style="left:75px">server</span></div>
<div class="row" style="top:931px"><svg class="arr" style="left:20px" width="12" height="19" viewBox="0 0 12 19"><path d="M4.300 5.200 L8.700 9.600 L4.300 14" fill="none" stroke="#b2b4b5" stroke-width="1.100"/></svg><svg class="ic" style="left:37px" width="16" height="19" viewBox="0 0 16 19"><path d="M1.5 15.5 V5 Q1.5 4.5 2 4.5 H6.2 L8 6.5 H14 Q14.5 6.5 14.5 7 V15 Q14.5 15.500 14 15.500 H2 Q1.5 15.500 1.5 15 Z" fill="none" stroke="#b2b4b5" stroke-width="1" stroke-linejoin="round"/></svg><svg class="ic" style="left:55px" width="16" height="19" viewBox="0 0 16 19"><circle cx="8" cy="10" r="6.750" fill="#55d400" stroke="#151515" stroke-width="1"/><path d="M4.600 10.400 L7 12.700 L11.400 7.900" fill="none" stroke="#111" stroke-width="0.950"/></svg><span class="lbl" style="left:75px">sound</span></div>
</div>
<div id="tsb">
 <svg class="abs" style="left:0;top:0" width="10" height="12" viewBox="0 0 10 12"><path d="M2 8 L5 5 L8 8" fill="none" stroke="#a4a6a8" stroke-width="1"/></svg>
 <div class="thumb" style="left:2px;top:14px;width:6px;height:712px"></div>
 <svg class="abs" style="left:0;top:934px" width="10" height="12" viewBox="0 0 10 12"><path d="M2 4 L5 7 L8 4" fill="none" stroke="#a4a6a8" stroke-width="1"/></svg>
</div>
</div>
<div class="abs" style="left:331px;top:530px;width:3px;height:3px;background:#c6c7c8;border-radius:1.5px"></div><div class="abs" style="left:331px;top:535px;width:3px;height:3px;background:#c6c7c8;border-radius:1.5px"></div><div class="abs" style="left:331px;top:540px;width:3px;height:3px;background:#c6c7c8;border-radius:1.5px"></div>
<div class="abs" style="left:1246px;top:530px;width:3px;height:3px;background:#c6c7c8;border-radius:1.5px"></div><div class="abs" style="left:1246px;top:535px;width:3px;height:3px;background:#c6c7c8;border-radius:1.5px"></div><div class="abs" style="left:1246px;top:540px;width:3px;height:3px;background:#c6c7c8;border-radius:1.5px"></div>

<div id="grp"></div>
<div class="abs lb" style="left:341px;top:52px;background:#3c3f41;padding:0 3px 0 1px;line-height:19px;letter-spacing:0.15px">Identifier Info</div>
<div class="abs lb" style="left:342px;top:75px;line-height:19px">Field</div>
<div class="abs lb" style="left:342px;top:98px;line-height:19px">Class</div>
<div class="abs lb" style="left:342px;top:119px;line-height:19px">Obfuscated Name</div>
<div class="abs lb" style="left:342px;top:140px;line-height:19px">Type Descriptor</div>
<div class="abs" style="left:447px;top:74px;width:791px;height:21px;background:#3f4244;border:1px solid;border-color:#1c1d1e #6d7072 #6d7072 #1c1d1e;box-shadow:inset 1px 1px 0 #26282a"></div>
<div class="abs val" style="left:449px;top:75px;line-height:20px">shapeCache</div>
<div class="abs val" style="left:447px;top:98px;line-height:19px">net/minecraft/fluid/FlowableFluid</div>
<div class="abs val" style="left:447px;top:119px;line-height:19px">f_ksswwgef</div>
<div class="abs val" style="left:447px;top:140px;line-height:19px">Ljava/util/Map;</div>
<div class="etab lb" style="left:349px;top:211px;">DataCache</div>
<div class="etab lb" style="left:465px;top:211px;letter-spacing:-0.1px">FlowableFluid</div>
<div class="abs" style="left:542px;top:209px;width:24px;height:24px;background:#4c5052"></div>
<svg class="abs" style="left:548px;top:215px;" width="12" height="12" viewBox="0 0 12 12"><path d="M1.800 1.800 L10.200 10.200 M10.200 1.800 L1.800 10.200" fill="none" stroke="#d0d2d3" stroke-width="1.100"/></svg>
<div class="abs" style="left:335px;top:239px;width:910px;height:1px;background:#5f6163"></div>
<div class="abs" style="left:451px;top:237px;width:129px;height:3px;background:#3f82cc"></div>

<div id="ed">
<div id="gut"><div id="gutin">
<div class="ln" style="top:0px">25</div>
<div class="ln" style="top:15px">26</div>
<div class="ln" style="top:30px">27</div>
<div class="ln" style="top:45px">28</div>
<div class="ln" style="top:60px">29</div>
<div class="ln" style="top:75px">30</div>
<div class="ln" style="top:90px">31</div>
<div class="ln" style="top:105px">32</div>
<div class="ln" style="top:120px">33</div>
<div class="ln" style="top:135px">34</div>
<div class="ln" style="top:150px">35</div>
<div class="ln" style="top:165px">36</div>
<div class="ln" style="top:180px">37</div>
<div class="ln" style="top:195px">38</div>
<div class="ln cur" style="top:210px">39</div>
<div class="ln" style="top:225px">40</div>
<div class="ln" style="top:240px">41</div>
<div class="ln" style="top:255px">42</div>
<div class="ln" style="top:270px">43</div>
<div class="ln" style="top:285px">44</div>
<div class="ln" style="top:300px">45</div>
<div class="ln" style="top:315px">46</div>
<div class="ln" style="top:330px">47</div>
<div class="ln" style="top:345px">48</div>
<div class="ln" style="top:360px">49</div>
<div class="ln" style="top:375px">50</div>
<div class="ln" style="top:390px">51</div>
<div class="ln" style="top:405px">52</div>
<div class="ln" style="top:420px">53</div>
<div class="ln" style="top:435px">54</div>
<div class="ln" style="top:450px">55</div>
<div class="ln" style="top:465px">56</div>
<div class="ln" style="top:480px">57</div>
<div class="ln" style="top:495px">58</div>
<div class="ln" style="top:510px">59</div>
<div class="ln" style="top:525px">60</div>
<div class="ln" style="top:540px">61</div>
<div class="ln" style="top:555px">62</div>
<div class="ln" style="top:570px">63</div>
<div class="ln" style="top:585px">64</div>
<div class="ln" style="top:600px">65</div>
<div class="ln" style="top:615px">66</div>
<div class="ln" style="top:630px">67</div>
<div class="ln" style="top:645px">68</div>
<div class="ln" style="top:660px">69</div>
<div class="ln" style="top:675px">70</div>
<div class="ln" style="top:690px">71</div>
<div class="ln" style="top:705px">72</div>
<div class="ln" style="top:720px">73</div>
<div class="ln" style="top:735px">74</div>
<div class="ln" style="top:750px">75</div>
</div></div>
<div id="code"><div id="codein">
<div class="cl" style="top:0px"><span class="c">// access flags 0x19</span></div>
<div class="cl" style="top:15px"><span class="k">public final static</span> L<span class="g">net/minecraft/state/property/IntProperty</span>; <span class="g">LEVEL</span></div>
<div class="cl" style="top:30px"></div>
<div class="cl" style="top:45px"><span class="c">// access flags 0x1A</span></div>
<div class="cl" style="top:60px"><span class="k">private final static</span> I <span class="r">f_weewhugx</span> = <span class="n">200</span></div>
<div class="cl" style="top:75px"></div>
<div class="cl" style="top:90px"><span class="c">// access flags 0x1A</span></div>
<div class="cl" style="top:105px"><span class="c">// signature Ljava/lang/ThreadLocal&lt;Lit/unimi/dsi/fastutil/objects/Object2ByteLinkedOpenHashMap&lt;Lnet/minecraft/unmapped/C_rxhyurmy;&gt;;&gt;;</span></div>
<div class="cl" style="top:120px"><span class="c">// declaration: f_daihqheh extends java.lang.ThreadLocal&lt;it.unimi.dsi.fastutil.objects.Object2ByteLinkedOpenHashMap&lt;net.minecraft.unmapped.C_rxhyurmy&gt;&gt;</span></div>
<div class="cl" style="top:135px"><span class="k">private final static</span> Ljava/lang/ThreadLocal; <span class="r">f_daihqheh</span></div>
<div class="cl" style="top:150px"></div>
<div class="cl" style="top:165px"><span class="c">// access flags 0x12</span></div>
<div class="cl" style="top:180px"><span class="c">// signature Ljava/util/Map&lt;Lnet/minecraft/unmapped/C_xqketiuf;Lnet/minecraft/unmapped/C_zscvhwbd;&gt;;</span></div>
<div class="cl" style="top:195px"><span class="c">// declaration: f_ksswwgef extends java.util.Map&lt;net.minecraft.unmapped.C_xqketiuf, net.minecraft.unmapped.C_zscvhwbd&gt;</span></div>
<div class="cl" style="top:210px"><span class="k">private final</span> Ljava/util/Map; <span class="g">shapeCache</span><span class="caret"></span></div>
<div class="cl" style="top:225px"></div>
<div class="cl" style="top:240px"><span class="c">// access flags 0x1</span></div>
<div class="cl" style="top:255px"><span class="k">public</span> &lt;init&gt;()V</div>
<div class="cl" style="top:270px"> L0</div>
<div class="cl" style="top:285px">  LINENUMBER <span class="n">34</span> L0</div>
<div class="cl" style="top:300px">  ALOAD <span class="n">0</span></div>
<div class="cl" style="top:315px">  INVOKESPECIAL <span class="g">net/minecraft/fluid/Fluid</span>.&lt;init&gt; ()V</div>
<div class="cl" style="top:330px"> L1</div>
<div class="cl" style="top:345px">  LINENUMBER <span class="n">49</span> L1</div>
<div class="cl" style="top:360px">  ALOAD <span class="n">0</span></div>
<div class="cl" style="top:375px">  INVOKESTATIC com/google/common/collect/Maps.newIdentityHashMap ()Ljava/util/IdentityHashMap;</div>
<div class="cl" style="top:390px">  PUTFIELD <span class="g">net/minecraft/fluid/FlowableFluid</span>.<span class="g">shapeCache</span> : Ljava/util/Map;</div>
<div class="cl" style="top:405px">  RETURN</div>
<div class="cl" style="top:420px"> L2</div>
<div class="cl" style="top:435px">  LOCALVARIABLE <span class="k">this</span> L<span class="g">net/minecraft/fluid/FlowableFluid</span>; L0 L2 <span class="n">0</span></div>
<div class="cl" style="top:450px">  MAXSTACK = <span class="n">2</span></div>
<div class="cl" style="top:465px">  MAXLOCALS = <span class="n">1</span></div>
<div class="cl" style="top:480px"></div>
<div class="cl" style="top:495px"><span class="c">// access flags 0x4</span></div>
<div class="cl" style="top:510px"><span class="c">// signature (Lnet/minecraft/unmapped/C_ezfeikaq$C_mfnsmxhw&lt;Lnet/minecraft/unmapped/C_rxhyurmy;Lnet/minecraft/unmapped/C_txtgbcaz;&gt;;)V</span></div>
<div class="cl" style="top:525px"><span class="c">// declaration: void m_nnamigjt(net.minecraft.unmapped.C_ezfeikaq$C_mfnsmxhw&lt;net.minecraft.unmapped.C_rxhyurmy, net.minecraft.unmapped.C_txtgbcaz&gt;)</span></div>
<div class="cl" style="top:540px"><span class="k">protected</span> <span class="g">appendProperties</span>(L<span class="g">Builder</span>;)V</div>
<div class="cl" style="top:555px">  <span class="c">// parameter  arg</span></div>
<div class="cl" style="top:570px"> L0</div>
<div class="cl" style="top:585px">  LINENUMBER <span class="n">53</span> L0</div>
<div class="cl" style="top:600px">  ALOAD <span class="n">1</span></div>
<div class="cl" style="top:615px">  ICONST_1</div>
<div class="cl" style="top:630px">  ANEWARRAY <span class="g">net/minecraft/state/property/Property</span></div>
<div class="cl" style="top:645px">  DUP</div>
<div class="cl" style="top:660px">  ICONST_0</div>
<div class="cl" style="top:675px">  GETSTATIC <span class="g">net/minecraft/fluid/FlowableFluid</span>.<span class="g">FALLING</span> : L<span class="g">net/minecraft/state/property/BooleanProperty</span>;</div>
<div class="cl" style="top:690px">  AASTORE</div>
<div class="cl" style="top:705px">  INVOKEVIRTUAL <span class="g">Builder</span>.<span class="g">add</span> ([L<span class="g">net/minecraft/state/property/Property</span>;)L<span class="g">Builder</span>;</div>
<div class="cl" style="top:720px">  POP</div>
<div class="cl" style="top:735px"> L1</div>
<div class="cl" style="top:750px">  LINENUMBER <span class="n">54</span> L1</div>
</div></div>

<div class="vsb">
 <svg class="abs" style="left:0;top:0" width="10" height="12" viewBox="0 0 10 12"><path d="M2 8 L5 5 L8 8" fill="none" stroke="#a4a6a8" stroke-width="1"/></svg>
 <div class="thumb" style="left:2px;top:21px;width:6px;height:18px"></div>
 <svg class="abs" style="left:0;top:756px" width="10" height="12" viewBox="0 0 10 12"><path d="M2 4 L5 7 L8 4" fill="none" stroke="#a4a6a8" stroke-width="1"/></svg>
</div>
<div class="hsb">
 <svg class="abs" style="left:38px;top:0" width="12" height="10" viewBox="0 0 12 10"><path d="M8 2 L5 5 L8 8" fill="none" stroke="#a4a6a8" stroke-width="1"/></svg>
 <div class="thumb" style="left:52px;top:2px;width:227px;height:6px"></div>
 <div class="abs" style="left:886px;top:0;width:12px;height:10px;background:#404347"></div>
 <svg class="abs" style="left:886px;top:0" width="12" height="10" viewBox="0 0 12 10"><path d="M4.500 2 L7.500 5 L4.500 8" fill="none" stroke="#a4a6a8" stroke-width="1"/></svg>
 <div class="abs" style="left:898px;top:0;width:10px;height:10px;background:#3c3f41"></div>
</div>
<div class="btn2" style="left:622px;top:36px;width:158px;height:23px"></div>
<div class="abs" style="left:629px;top:36px;line-height:23px;color:#c4c6c7;white-space:nowrap;letter-spacing:0.25px">OBFUSCATED</div>
<svg class="abs" style="left:763px;top:43px" width="12" height="10" viewBox="0 0 12 10"><path d="M1.500 2.500 L6 7 L10.500 2.500" fill="none" stroke="#aeb0b2" stroke-width="1.100"/></svg>
<div class="btn2" style="left:785px;top:36px;width:22px;height:22px"></div>
<svg class="abs" style="left:790px;top:43px" width="12" height="10" viewBox="0 0 12 10"><path d="M1.500 7.500 L6 3 L10.500 7.500" fill="none" stroke="#d4d6d7" stroke-width="1.200"/></svg>
<div class="btn2" style="left:812px;top:36px;width:22px;height:22px"></div>
<svg class="abs" style="left:817px;top:43px" width="12" height="10" viewBox="0 0 12 10"><path d="M1.500 2.500 L6 7 L10.500 2.500" fill="none" stroke="#d4d6d7" stroke-width="1.200"/></svg>
<div class="abs" style="left:839px;top:36px;line-height:23px;color:#cfd1d2;white-space:nowrap">01/9</div>

</div>
<div class="abs" style="left:1080px;top:1020px;width:200px;height:18px;line-height:18px;text-align:right;color:#c8cacb;-webkit-text-stroke:0.2px #c8cacb;white-space:nowrap;padding-right:0;letter-spacing:-0.1px">Disconnected.</div>
</div></div>
</body></html>
